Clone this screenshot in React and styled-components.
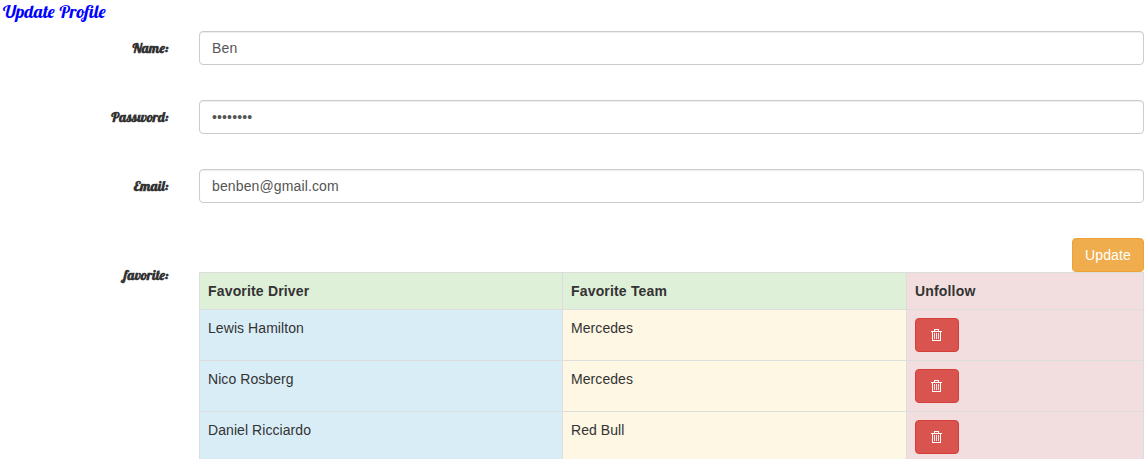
import React from 'react';
import styled, { createGlobalStyle } from 'styled-components';

const GlobalStyle = createGlobalStyle`
  *, *::before, *::after { box-sizing: border-box; }
  html, body { height: 100%; }
  body {
    margin: 0;
    overflow: hidden;
    background: #fff;
    color: #333;
    font: 14px/20px "Liberation Sans", Arial, sans-serif;
  }
`;

const Page = styled.main`
  width: 1144px;
  height: 459px;
  overflow: hidden;
`;

const Title = styled.h1`
  margin: 0;
  padding: 0 0 0 3px;
  height: 31px;
  color: #00f;
  font: 400 18px/24px Lobster, "Liberation Serif", cursive;
  word-spacing: 1px;
`;

const Form = styled.form`
  display: flex;
  flex-direction: column;
  gap: 35px;
`;

const Field = styled.div`
  display: grid;
  grid-template-columns: 169px 945px;
  column-gap: 30px;
`;

const Label = styled.label`
  padding: 7px 0.5px 0 0;
  text-align: right;
  white-space: nowrap;
  font: 700 14px/20px Lobster, "Liberation Serif", cursive;
`;

const Input = styled.input`
  width: 100%;
  height: 34px;
  padding: 6px 12px;
  border: 1px solid #ccc;
  border-radius: 4px;
  background: #fff;
  box-shadow: inset 0 1px 1px rgba(0, 0, 0, 0.075);
  color: #555;
  font: inherit;
  letter-spacing: 0.13px;
  outline: none;
`;

const Button = styled.button`
  height: 34px;
  padding: 6px 12px;
  border: 1px solid;
  border-radius: 4px;
  color: #fff;
  font: inherit;
`;

const UpdateButton = styled(Button)`
  width: 72px;
  padding: 6px 11px;
  border-color: #eea236;
  background: #f0ad4e;
  letter-spacing: 0.12px;
`;

const DeleteButton = styled(Button)`
  display: flex;
  align-items: center;
  justify-content: flex-start;
  width: 44px;
  padding: 6px 15px;
  border-color: #d43f3a;
  background: #d9534f;
`;

const Actions = styled.div`
  display: flex;
  justify-content: flex-end;
`;

const FavoriteLabel = styled(Label)`
  padding-top: 0;
  line-height: 6px;
`;

const Table = styled.table`
  width: 945px;
  table-layout: fixed;
  border-collapse: collapse;
`;

const tones = { green: '#dff0d8', blue: '#d9edf7', cream: '#fdf7e3', red: '#f2dede' };

const Cell = styled.td`
  padding: 8px;
  border: 1px solid #ddd;
  background: ${(p) => tones[p.$tone]};
  text-align: left;
  vertical-align: top;
  letter-spacing: 0.07px;
`;

const HeadCell = styled(Cell)`
  letter-spacing: 0.17px;
`;

const TrashIcon = () => (
  <svg width="11" height="12" viewBox="0 0 11 12" fill="none" stroke="#fff" shapeRendering="crispEdges" aria-hidden="true">
    <path d="M3 .5h5M3.5 0v2M7.5 0v2M0 2.5h11" />
    <path d="M1.5 2v9.5h8V2" />
    <path d="M3.5 4v6M5.5 4v6M7.5 4v6" strokeOpacity=".85" />
  </svg>
);

const fields = [
  { id: 'name', label: 'Name:', value: 'Ben' },
  { id: 'password', label: 'Password:', value: '••••••••' },
  { id: 'email', label: 'Email:', value: 'benben@gmail.com' },
];

const favorites = [
  ['Lewis Hamilton', 'Mercedes'],
  ['Nico Rosberg', 'Mercedes'],
  ['Daniel Ricciardo', 'Red Bull'],
];

export default function App() {
  return (
    <Page>
      <GlobalStyle />
      <Title>Update Profile</Title>
      <Form onSubmit={(e) => e.preventDefault()}>
        {fields.map((f) => (
          <Field key={f.id}>
            <Label htmlFor={f.id}>{f.label}</Label>
            <Input id={f.id} defaultValue={f.value} />
          </Field>
        ))}
        <div>
          <Actions><UpdateButton>Update</UpdateButton></Actions>
          <Field>
            <FavoriteLabel as="span">favorite:</FavoriteLabel>
            <Table>
              <colgroup>
                <col style={{ width: 363 }} />
                <col style={{ width: 344 }} />
                <col />
              </colgroup>
              <thead>
                <tr>
                  <HeadCell as="th" $tone="green">Favorite Driver</HeadCell>
                  <HeadCell as="th" $tone="green">Favorite Team</HeadCell>
                  <HeadCell as="th" $tone="red">Unfollow</HeadCell>
                </tr>
              </thead>
              <tbody>
                {favorites.map(([driver, team]) => (
                  <tr key={driver}>
                    <Cell $tone="blue">{driver}</Cell>
                    <Cell $tone="cream">{team}</Cell>
                    <Cell $tone="red">
                      <DeleteButton type="button" aria-label="Unfollow"><TrashIcon /></DeleteButton>
                    </Cell>
                  </tr>
                ))}
              </tbody>
            </Table>
          </Field>
        </div>
      </Form>
    </Page>
  );
}
